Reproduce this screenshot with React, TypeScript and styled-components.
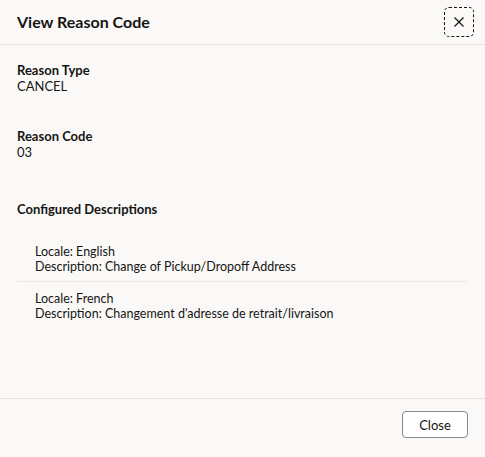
import React from "react";
import styled, { createGlobalStyle } from "styled-components";

const Global = createGlobalStyle`
  html, body { margin: 0; padding: 0; background: #faf9f8; }
  body { font-family: Lato, "Noto Sans", "Liberation Sans", sans-serif; color: #161513; }
  * { box-sizing: border-box; }
`;

const Dialog = styled.div`
  width: 485px;
  height: 457px;
  display: flex;
  flex-direction: column;
  background: #faf9f8;
`;

const Header = styled.div`
  height: 45px;
  display: flex;
  align-items: center;
  justify-content: space-between;
  padding: 0 11px 0 17px;
  border-bottom: 1px solid #e4e2df;
`;

const Title = styled.h1`
  margin: 0;
  font-size: 16px;
  font-weight: 700;
  line-height: 20px;
`;

const IconButton = styled.button`
  width: 30px;
  height: 30px;
  border: 1px dashed #161513;
  border-radius: 5px;
  background: transparent;
  display: flex;
  align-items: center;
  justify-content: center;
  padding: 0;
  color: #161513;
`;

const Body = styled.div`
  flex: 1;
  padding: 17px 17px 0 17px;
  display: flex;
  flex-direction: column;
`;

const Field = styled.div<{ $gap?: number }>`
  display: flex;
  flex-direction: column;
  margin-bottom: ${(p) => p.$gap ?? 0}px;
`;

const Label = styled.div`
  font-size: 13px;
  font-weight: 700;
  line-height: 16px;
`;

const Value = styled.div`
  font-size: 13px;
  line-height: 16px;
`;

const List = styled.div`
  display: flex;
  flex-direction: column;
  margin-top: 20px;
`;

const Item = styled.div<{ $divider?: boolean }>`
  padding: ${(p) => (p.$divider ? "9px" : "7px")} 18px 7px 18px;
  border-top: ${(p) => (p.$divider ? "1px solid #ebe9e6" : "none")};
  font-size: 12.5px;
  line-height: 15px;
`;

const Footer = styled.div`
  height: 59px;
  border-top: 1px solid #e4e2df;
  display: flex;
  align-items: flex-start;
  justify-content: flex-end;
  padding: 12px 17px 0 0;
`;

const Button = styled.button`
  width: 66px;
  height: 27px;
  border: 1px solid #8b8986;
  border-radius: 4px;
  background: #ffffff;
  font-family: inherit;
  font-size: 13px;
  color: #161513;
`;

export default function App() {
  return (
    <>
      <Global />
      <Dialog>
        <Header>
          <Title>View Reason Code</Title>
          <IconButton aria-label="Close">
            <svg width="12" height="12" viewBox="0 0 12 12">
              <path d="M1.5 1.5 L10.5 10.5 M10.5 1.5 L1.5 10.5" stroke="#161513" strokeWidth="1.2" />
            </svg>
          </IconButton>
        </Header>
        <Body>
          <Field $gap={34}>
            <Label>Reason Type</Label>
            <Value>CANCEL</Value>
          </Field>
          <Field $gap={41}>
            <Label>Reason Code</Label>
            <Value>03</Value>
          </Field>
          <Label>Configured Descriptions</Label>
          <List>
            <Item>
              <div>Locale: English</div>
              <div>Description: Change of Pickup/Dropoff Address</div>
            </Item>
            <Item $divider>
              <div>Locale: French</div>
              <div>Description: Changement d'adresse de retrait/livraison</div>
            </Item>
          </List>
        </Body>
        <Footer>
          <Button>Close</Button>
        </Footer>
      </Dialog>
    </>
  );
}
